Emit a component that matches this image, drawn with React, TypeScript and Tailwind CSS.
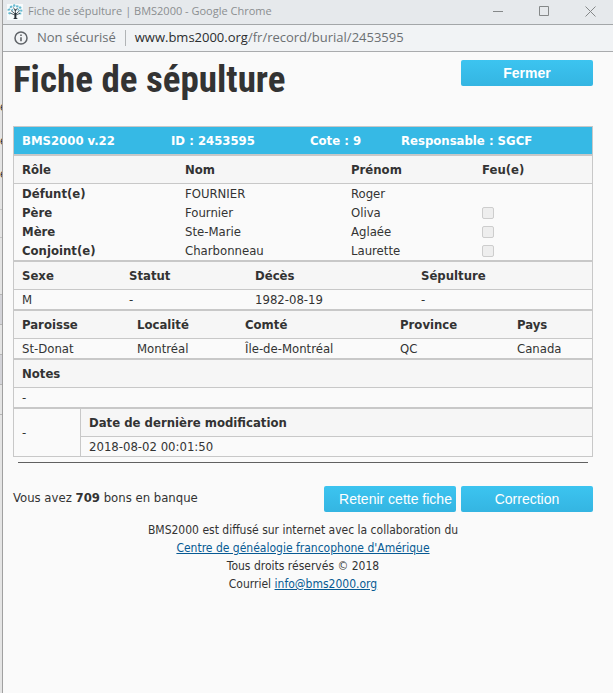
import type { ReactNode } from "react";

type Column = { label: string; width: string };

// --- DATA ---
const personColumns: Column[] = [
  { label: "Rôle", width: "w-[163px]" },
  { label: "Nom", width: "w-[166px]" },
  { label: "Prénom", width: "w-[131px]" },
  { label: "Feu(e)", width: "w-[118px]" },
];

const persons = [
  { role: "Défunt(e)", nom: "FOURNIER", prenom: "Roger", feu: false },
  { role: "Père", nom: "Fournier", prenom: "Oliva", feu: true },
  { role: "Mère", nom: "Ste-Marie", prenom: "Aglaée", feu: true },
  { role: "Conjoint(e)", nom: "Charbonneau", prenom: "Laurette", feu: true },
];

const eventColumns: Column[] = [
  { label: "Sexe", width: "w-[107px]" },
  { label: "Statut", width: "w-[126px]" },
  { label: "Décès", width: "w-[166px]" },
  { label: "Sépulture", width: "w-[179px]" },
];

const placeColumns: Column[] = [
  { label: "Paroisse", width: "w-[115px]" },
  { label: "Localité", width: "w-[108px]" },
  { label: "Comté", width: "w-[155px]" },
  { label: "Province", width: "w-[117px]" },
  { label: "Pays", width: "w-[83px]" },
];

// What is left visible of the page behind the popup
const backdropRows = [
  { style: "h-[98px]", text: "" },
  { style: "h-[34px]", text: "e" },
  { style: "h-[33px]", text: "e" },
  { style: "h-[45px] border-b border-[#c4c4c4]", text: "e" },
  { style: "h-[28px] border-b border-[#c4c4c4]", text: "" },
  { style: "h-[57px] border-b border-[#b4b4b4]", text: "" },
  { style: "h-[30px] border-b border-[#b4b4b4] bg-[#d3d3d8]", text: "" },
  { style: "h-[30px] border-b border-[#b4b4b4]", text: "" },
  { style: "h-[30px] border-b border-[#b4b4b4] bg-[#d3d3d8]", text: "" },
  { style: "h-[30px] border-b border-[#b4b4b4]", text: "" },
];

const tableClass = "w-full table-fixed border-separate border-spacing-0 border border-[#c8c8c8] text-left text-[13px] leading-[18px]";
const headClass = "h-[28px] border-b border-[#c8c8c8] bg-[#f6f6f6] px-2 py-0 font-bold";
const cellClass = "h-[19px] px-2 py-0";

function RecordTable({ columns, children }: { columns: Column[]; children: ReactNode }) {
  return (
    <table className={tableClass}>
      <thead>
        <tr>
          {columns.map((col) => (
            <th key={col.label} scope="col" className={`${headClass} ${col.width}`}>{col.label}</th>
          ))}
        </tr>
      </thead>
      <tbody>{children}</tbody>
    </table>
  );
}

function ValueRow({ values }: { values: string[] }) {
  return (
    <tr>
      {values.map((value, i) => (
        <td key={i} className={cellClass}>{value}</td>
      ))}
    </tr>
  );
}

function ActionButton({ children, className = "" }: { children: ReactNode; className?: string }) {
  return (
    <button
      type="button"
      className={`h-[26px] w-[132px] shrink-0 whitespace-nowrap rounded-[2px] bg-linear-to-b from-[#3cc4f0] to-[#34b5e2] font-['Liberation_Sans',sans-serif] text-[14px] text-white ${className}`}
    >
      {children}
    </button>
  );
}

function TreeIcon() {
  return (
    <svg className="size-4 shrink-0" viewBox="0 0 16 16" fill="none">
      <rect width="16" height="16" fill="#f7fbfc" />
      <g fill="#68bad0">
        <path d="M.6 5.2l2-1 1 1.4-1.4 1.2L.4 6.6zM3 2l2-.6.6 1.6-1.6 1.2L2.6 3.6zM6.2.6L8 .3l.6 1.6-1.6 1L6 2.2zM9.4 1.2l2 .2.2 1.8-1.8.4-.9-1.2zM12.2 2.6l1.8-.2.6 1.6-1.6.9-1.2-.8zM13.6 5.6l1.8.2v1.6l-1.6.4-.9-1zM12.4 8.6l1.8.2.2 1.4-1.8.4-.9-1zM1.4 8.4l1.8-.4.9 1.4-1.4 1.2-1.5-.8zM4.4 5.2l1.4-.4.6 1.4-1.4.8zM10.4 5l1.6-.2.2 1.6-1.5.4z" />
      </g>
      <path d="M8.4 15V5M8.4 10L4 6.5M8.4 10.5L12.8 6.5M8.4 7L6.5 3.5M8.4 7L10.5 4M3.5 9.2L8 11M9 11l4-1.7" stroke="#303b42" strokeWidth="0.8" />
      <path d="M7.6 9h1.6l.2 5 1.6 1H6l1.4-1z" fill="#252d33" />
    </svg>
  );
}

function TitleBar() {
  return (
    <header className="flex h-[25px] items-center border-b border-[#a3a6a8] bg-[#e6e9ec] pl-1 font-['Open_Sans','Noto_Sans',sans-serif] text-[11px] text-[#8b8e90]">
      <TreeIcon />
      <span className="ml-[5px] flex-1 truncate pb-[2px]">Fiche de sépulture | BMS2000 - Google Chrome</span>
      <div className="flex h-full pb-[2px]">
        <button type="button" aria-label="Réduire" className="grid w-[46px] place-items-center">
          <svg className="size-[11px]" viewBox="0 0 11 11"><path d="M0 5.5h10" stroke="#858889" /></svg>
        </button>
        <button type="button" aria-label="Agrandir" className="grid w-[46px] place-items-center">
          <svg className="size-[11px]" viewBox="0 0 11 11"><path d="M.5.5h9v9h-9z" fill="none" stroke="#858889" /></svg>
        </button>
        <button type="button" aria-label="Fermer la fenêtre" className="grid w-[46px] place-items-center">
          <svg className="size-[11px]" viewBox="0 0 11 11"><path d="M.5.5l10 10M10.5.5l-10 10" stroke="#858889" /></svg>
        </button>
      </div>
    </header>
  );
}

function AddressBar() {
  return (
    <div className="flex h-[27px] items-center border-b border-[#a9abad] bg-[#f1f3f5] pl-[11px] font-['Open_Sans','Noto_Sans',sans-serif] text-[13px] text-[#6c7073]">
      <svg className="size-[14px] shrink-0" viewBox="0 0 14 14" fill="none" stroke="#5f6368">
        <circle cx="7" cy="7" r="6" strokeWidth="1.5" />
        <path d="M7 6.2v4M7 3.5v1.5" strokeWidth="1.6" />
      </svg>
      <span className="ml-[9px]">Non sécurisé</span>
      <span className="mx-[9px] h-4 w-px bg-[#b1b4b6]" />
      <span><span className="text-[#2b2d2f]">www.bms2000.org</span>/fr/record/burial/2453595</span>
    </div>
  );
}

export default function App() {
  return (
    <div className="flex min-h-screen bg-[#fafafa] font-['DejaVu_Sans_Condensed','Noto_Sans',sans-serif] text-[12px] text-[#333]">
      {/* Page behind the popup */}
      <div className="w-[3px] shrink-0 overflow-hidden border-r border-[#a0a0a0] bg-[#e4e4e4]" aria-hidden="true">
        {backdropRows.map((row, i) => (
          <div key={i} className={row.style}>{row.text}</div>
        ))}
      </div>

      <div className="min-w-0 flex-1">
        <TitleBar />
        <AddressBar />

        <main className="pl-[10px] pr-5 pt-2">
          <div className="flex items-start justify-between">
            <h1 className="font-['Roboto_Condensed',sans-serif] text-[37px] font-bold leading-[40px]">Fiche de sépulture</h1>
            <ActionButton className="font-bold">Fermer</ActionButton>
          </div>

          <div className="mt-[26px]">
            <table className="w-full table-fixed border-separate border-spacing-0 border border-[#c8c8c8] bg-[#36b9e5] text-left text-[13px] text-white">
              <tbody>
                <tr>
                  <th className="h-[27px] w-[149px] px-2 py-0">BMS2000 v.22</th>
                  <th className="w-[139px] px-2 py-0">ID : 2453595</th>
                  <th className="w-[91px] px-2 py-0">Cote : 9</th>
                  <th className="w-[199px] px-2 py-0">Responsable : SGCF</th>
                </tr>
              </tbody>
            </table>

            <RecordTable columns={personColumns}>
              {persons.map((person) => (
                <tr key={person.role}>
                  <th scope="row" className={`${cellClass} font-bold`}>{person.role}</th>
                  <td className={cellClass}>{person.nom}</td>
                  <td className={cellClass}>{person.prenom}</td>
                  <td className={cellClass}>
                    {person.feu && (
                      <input
                        type="checkbox"
                        disabled
                        aria-label={`Feu(e) : ${person.role}`}
                        className="block size-3 appearance-none rounded-[2px] border border-[#cdcdcd] bg-[#eeeeee]"
                      />
                    )}
                  </td>
                </tr>
              ))}
            </RecordTable>

            <RecordTable columns={eventColumns}>
              <ValueRow values={["M", "-", "1982-08-19", "-"]} />
            </RecordTable>

            <RecordTable columns={placeColumns}>
              <ValueRow values={["St-Donat", "Montréal", "Île-de-Montréal", "QC", "Canada"]} />
            </RecordTable>

            <RecordTable columns={[{ label: "Notes", width: "w-full" }]}>
              <ValueRow values={["-"]} />
            </RecordTable>

            <table className={tableClass}>
              <tbody>
                <tr>
                  <td rowSpan={2} className="w-[67px] border-r border-[#c8c8c8] px-2 py-0">-</td>
                  <th className={headClass}>Date de dernière modification</th>
                </tr>
                <ValueRow values={["2018-08-02 00:01:50"]} />
              </tbody>
            </table>
          </div>

          <hr className="mx-[5px] mt-[5px] border-[#606060]" />

          <div className="mt-[23px] flex items-center gap-[5px]">
            <p className="flex-1 pb-[2px] text-[13px]">Vous avez <b>709</b> bons en banque</p>
            <ActionButton className="pl-[11px]">Retenir cette fiche</ActionButton>
            <ActionButton>Correction</ActionButton>
          </div>

          <footer className="mt-[9px] text-center leading-[18px]">
            <p>BMS2000 est diffusé sur internet avec la collaboration du</p>
            <p><a href="#centre" className="text-[#075a93] underline">Centre de généalogie francophone d'Amérique</a></p>
            <p>Tous droits réservés © 2018</p>
            <p>Courriel <a href="mailto:info@bms2000.org" className="text-[#075a93] underline">info@bms2000.org</a></p>
          </footer>
        </main>
      </div>
    </div>
  );
}
